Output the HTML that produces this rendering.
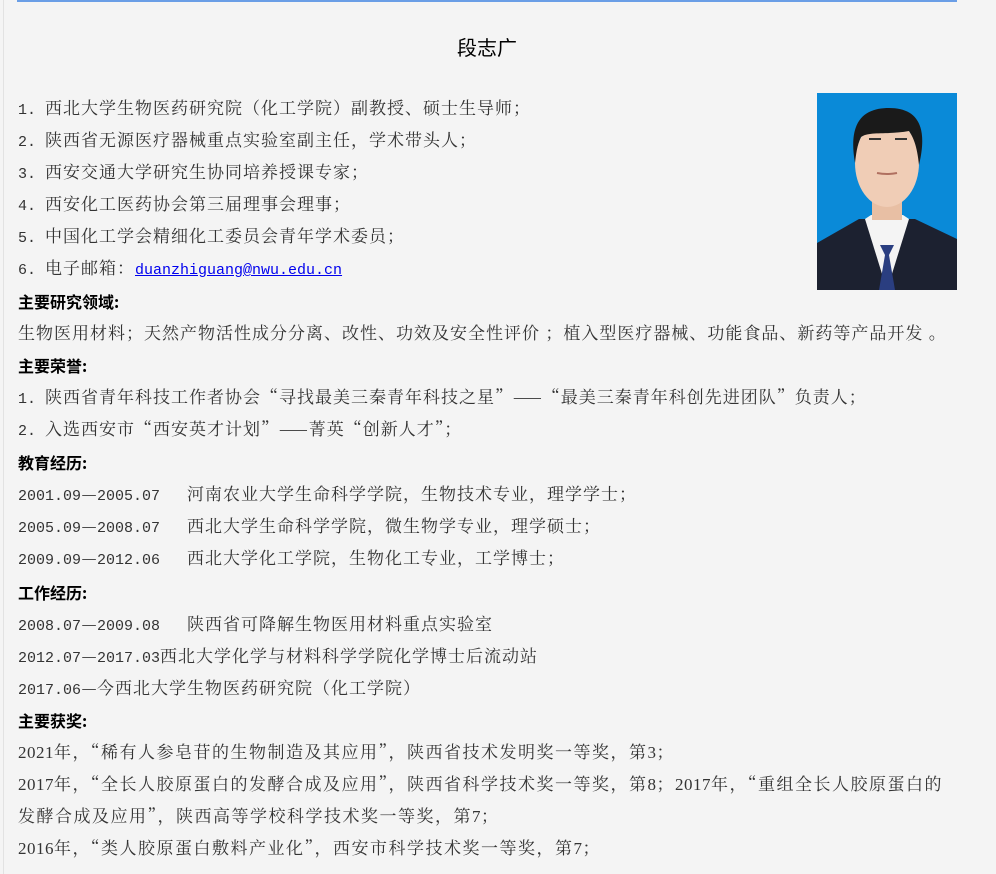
<!DOCTYPE html>
<html><head><meta charset="utf-8">
<style>
html,body{margin:0;padding:0;}
body{width:996px;height:874px;background:#f4f4f4;position:relative;overflow:hidden;
font-family:"Noto Serif CJK SC","Liberation Serif",serif;color:#333;font-size:17px;letter-spacing:1px;}
.l{position:absolute;left:18px;height:32px;line-height:32px;white-space:pre;}
.h{font-family:"Noto Sans CJK SC","Liberation Sans",sans-serif;font-weight:bold;color:#000;font-size:16px;letter-spacing:0;}
.m{font-family:"Liberation Mono",monospace;font-size:15px;letter-spacing:0;}
.s{font-family:"Liberation Serif",serif;font-size:17px;letter-spacing:0.5px;}
.aw{letter-spacing:1.5px;}
.n{display:inline-block;width:27px;}
.d{display:inline-block;width:16px;text-align:center;letter-spacing:0;}
a{color:#0000ee;}
</style></head><body>
<div style="position:absolute;left:3px;top:0;width:1px;height:874px;background:#e2e2e2"></div>
<div style="position:absolute;left:17px;top:0;width:940px;height:2px;background:#6a9ee6"></div>
<div style="position:absolute;left:0;top:32px;width:974px;text-align:center;font-family:'Noto Sans CJK SC',sans-serif;font-size:20px;color:#000;line-height:30px;letter-spacing:0">段志广</div>

<svg style="position:absolute;left:817px;top:93px" width="140" height="197" viewBox="0 0 140 197">
<rect width="140" height="197" fill="#0a8ad8"/>
<path d="M0 150 L42 126 L98 126 L140 146 L140 197 L0 197Z" fill="#1c2130"/>
<path d="M48 126 L70 197 L92 126 L86 122 L54 122Z" fill="#f4f4f4"/>
<path d="M63 152 L77 152 L72 162 L78 197 L62 197 L68 162Z" fill="#2a3e80"/>
<rect x="55" y="95" width="30" height="32" fill="#e8bfa4"/>
<ellipse cx="70" cy="70" rx="32" ry="44" fill="#f0cdb6"/>
<path d="M38 70 C30 25 50 15 72 15 C98 15 112 30 102 72 C100 52 96 44 92 38 C70 42 52 38 44 44 C40 52 39 62 38 70Z" fill="#1a1a1a"/>
<path d="M60 80 Q70 82 80 80" stroke="#b07060" stroke-width="2" fill="none"/>
<path d="M52 46 l12 0 M78 46 l12 0" stroke="#333" stroke-width="2"/>
</svg>

<div class="l" style="top:91px"><span class="m n">1.</span>西北大学生物医药研究院（化工学院）副教授、硕士生导师；</div>
<div class="l" style="top:123px"><span class="m n">2.</span>陕西省无源医疗器械重点实验室副主任，学术带头人；</div>
<div class="l" style="top:155px"><span class="m n">3.</span>西安交通大学研究生协同培养授课专家；</div>
<div class="l" style="top:187px"><span class="m n">4.</span>西安化工医药协会第三届理事会理事；</div>
<div class="l" style="top:219px"><span class="m n">5.</span>中国化工学会精细化工委员会青年学术委员；</div>
<div class="l" style="top:251px"><span class="m n">6.</span>电子邮箱：<a class="m" href="#">duanzhiguang@nwu.edu.cn</a></div>
<div class="l h" style="top:285px">主要研究领域:</div>
<div class="l" style="top:316px">生物医用材料；天然产物活性成分分离、改性、功效及安全性评价 ；植入型医疗器械、功能食品、新药等产品开发 。</div>
<div class="l h" style="top:349px">主要荣誉:</div>
<div class="l" style="top:380px"><span class="m n">1.</span>陕西省青年科技工作者协会“寻找最美三秦青年科技之星”——“最美三秦青年科创先进团队”负责人；</div>
<div class="l" style="top:412px"><span class="m n">2.</span>入选西安市“西安英才计划”——菁英“创新人才”；</div>
<div class="l h" style="top:446px">教育经历:</div>
<div class="l" style="top:477px"><span class="m">2001.09</span><span class="d">—</span><span class="m">2005.07   </span>河南农业大学生命科学学院，生物技术专业，理学学士；</div>
<div class="l" style="top:509px"><span class="m">2005.09</span><span class="d">—</span><span class="m">2008.07   </span>西北大学生命科学学院，微生物学专业，理学硕士；</div>
<div class="l" style="top:541px"><span class="m">2009.09</span><span class="d">—</span><span class="m">2012.06   </span>西北大学化工学院，生物化工专业，工学博士；</div>
<div class="l h" style="top:576px">工作经历:</div>
<div class="l" style="top:607px"><span class="m">2008.07</span><span class="d">—</span><span class="m">2009.08   </span>陕西省可降解生物医用材料重点实验室</div>
<div class="l" style="top:639px"><span class="m">2012.07</span><span class="d">—</span><span class="m">2017.03</span>西北大学化学与材料科学学院化学博士后流动站</div>
<div class="l" style="top:671px"><span class="m">2017.06</span><span class="d">—</span>今西北大学生物医药研究院（化工学院）</div>
<div class="l h" style="top:704px">主要获奖:</div>
<div class="l aw" style="top:735px"><span class="s">2021</span>年，“稀有人参皂苷的生物制造及其应用”，陕西省技术发明奖一等奖，第<span class="s">3</span>；</div>
<div class="l aw" style="top:767px"><span class="s">2017</span>年，“全长人胶原蛋白的发酵合成及应用”，陕西省科学技术奖一等奖，第<span class="s">8</span>；<span class="s">2017</span>年，“重组全长人胶原蛋白的</div>
<div class="l aw" style="top:799px">发酵合成及应用”，陕西高等学校科学技术奖一等奖，第<span class="s">7</span>；</div>
<div class="l aw" style="top:831px"><span class="s">2016</span>年，“类人胶原蛋白敷料产业化”，西安市科学技术奖一等奖，第<span class="s">7</span>；</div>
</body></html>
